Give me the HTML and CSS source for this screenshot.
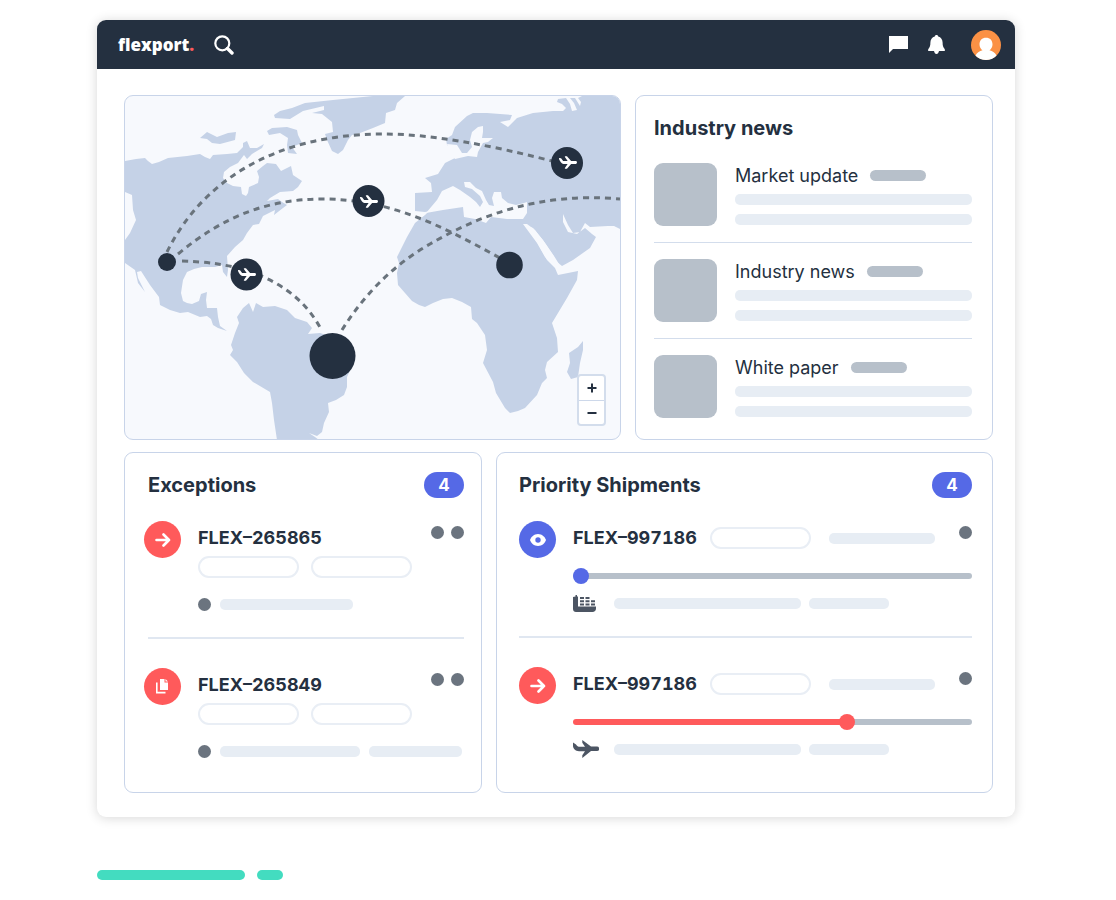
FILE: index.html
```html
<!DOCTYPE html>
<html lang="en">
<head>
  <meta charset="utf-8">
  <title>Flexport Dashboard</title>
  <meta name="viewport" content="width=device-width, initial-scale=1">
  <link rel="stylesheet" href="styles.css">
</head>
<body>
  <svg class="sprite" aria-hidden="true">
    <symbol id="plane" viewBox="0 0 26 18">
      <path d="M0 2.500L3 4.500C4 6.200 5 6.800 7 6.800H12L9.300 2.800V0L18 6.600H24a2.200 2.200 0 0 1 0 4.400H18L9.300 18V15.200L12 11.200H6C2.500 11.200 0 8.500 0 6Z"/>
    </symbol>
    <symbol id="plane-slim" viewBox="0 0 26 18">
      <path d="M0 2.500L3 2.800L6 7H12.500L8.500 1V0H11.500L17.500 7H24a2 2 0 0 1 0 4H17.500L11.500 18H8.500V17L12.500 11H6.500C3.500 11 1.500 7.500 0 4Z"/>
    </symbol>
    <symbol id="arrow" viewBox="0 0 16 14">
      <path d="M1.500 7H14M8.500 1.500L14 7L8.500 12.500" fill="none" stroke="currentColor" stroke-width="2.600" stroke-linecap="round" stroke-linejoin="round"/>
    </symbol>
  </svg>

  <div class="app">
    <header class="topbar">
      <a class="logo" href="#">flexport<span class="logo-dot">.</span></a>
      <button class="icon-btn" aria-label="Search">
        <svg width="20" height="20" viewBox="0 0 20 20" fill="none" stroke="#fff">
          <circle cx="8.300" cy="8.300" r="7" stroke-width="2.200"/>
          <path d="M13.500 13.500L18 18" stroke-width="3.400" stroke-linecap="round"/>
        </svg>
      </button>
      <div class="topbar-right">
        <button class="icon-btn" aria-label="Messages">
          <svg width="19" height="17" viewBox="0 0 19 17" fill="#fff"><path d="M0 0H19V13H4L0 17Z"/></svg>
        </button>
        <button class="icon-btn" aria-label="Notifications">
          <svg width="17" height="19" viewBox="0 0 17 19" fill="#fff"><path d="M8.500 0C9.500 0 10 .6 10.200 1.400C13 2.200 14.600 4.500 14.600 7.500C14.600 11 15.300 12.300 16.300 13.500C17 14.200 17.200 16 16.500 16H11C10.500 18 9.800 19 8.500 19S6.500 18 6 16H.5C-.2 16 0 14.200 .7 13.500C1.700 12.300 2.400 11 2.400 7.500C2.400 4.500 4 2.200 6.800 1.400C7 .6 7.500 0 8.500 0Z"/></svg>
        </button>
        <button class="icon-btn avatar" aria-label="Account">
          <svg width="30" height="30" viewBox="0 0 30 30">
            <circle cx="15" cy="15" r="15" fill="#fb9145"/>
            <path d="M15 7.800C19 7.800 21.500 10.500 21.500 14.300C21.500 17 20.300 19 18.500 20.300C21.500 21.200 24.500 23 25.500 25.700A15 15 0 0 1 4.500 25.700C5.500 23 8.500 21.200 11.500 20.300C9.700 19 8.500 17 8.500 14.300C8.500 10.500 11 7.800 15 7.800Z" fill="#fff"/>
          </svg>
        </button>
      </div>
    </header>

    <main class="content">
      <div class="row row-top">
        <section class="card map" aria-label="Shipment map">
          <svg class="map-svg" viewBox="125 96 495 343">
            <g class="land">
              <path d="M125 161L136 159L145 158L148 161L152 164L159 162L168 158L187 156L200 154L205 157L210 159L213 155L227 154L237 153L243 147L243 143L247 141L250 148L257 148L264 144L262 148L252 154L247 159L244 155L238 163L230 167L224 172L223 178L227 183L233 186L241 187L242 194L246 196L248 193L249 187L258 183L259 177L257 171L263 166L267 163L276 164L281 171L291 166L293 175L302 181L298 187L293 191L280 192L270 198L267 201L278 199L282 202L287 205L283 208L274 215L275 210L263 216L259 224L253 225L247 233L243 240L235 247L227 256L228 270L227 277L223 272L222 265L215 267L202 267L194 269L187 272L183 280L181 293L183 301L187 303L192 304L199 301L201 294L207 292L206 300L207 308L217 308L218 317L220 326L227 331L218 328L213 325L211 319L207 316L200 317L188 312L180 313L170 310L160 305L159 297L150 285L141 271L137 272L138 278L145 292L138 283L135 270L125 263V240L130 233L136 220L133 210L132 195L125 192Z"/>
              <path d="M200 138L207 132L217 137L228 133L236 132L235 140L220 144L212 143L207 139Z"/>
              <path d="M267 131L272 128L287 127L297 130L298 135L302 143L292 147L297 154L288 153L287 145L288 138L280 133L269 135Z"/>
              <path d="M274 115L280 111L292 108L305 103L333 100L373 96H405L397 103L395 110L386 113L385 123L373 128L360 133L352 135L348 140L343 150L338 154L332 151L327 140L325 134L333 132L332 122L322 114L312 113L324 110V106L303 111L290 119L275 118Z"/>
              <path d="M237 317L243 308L249 303L253 312L256 303L263 307L275 306L287 310L295 318L307 322L312 328L308 334L320 333L333 337L353 347L355 360L347 377V387L344 395L336 400L328 403L329 412L324 423L322 432L317 436L309 433L315 437L319 440H277L274 420L272 403L270 392L253 382L244 373L237 362L230 355L233 350L231 345L235 333L239 323Z"/>
              <path d="M428 212L443 208L463 205H530L525 225L537 242L547 260L555 268L558 275L578 271L577 280L567 298L552 323L557 338L558 352L547 362L545 370L547 378L542 383L537 395L525 408L518 411L510 413L505 408L496 393L493 382L483 363L487 350L485 335L477 323L472 319L471 307L462 302L452 298L443 299L433 303L425 307L419 305L412 301L398 285L397 273L399 263L397 257L407 237L415 223L425 215Z"/>
              <path d="M415 193L432 192L431 183L425 178L438 174L445 163L455 158L468 155L462 154L447 145L446 139L452 135L455 127L467 116L473 113L487 113L512 115L510 120L500 122L508 127L517 118L533 113L553 111L563 111L566 108L562 104L557 102L558 99L566 98L570 104L572 111L577 110L574 103L570 98L575 98L580 106L581 102L578 98L582 96H620V229L614 226L608 226L590 227L585 223L580 232L573 233L568 225L563 214L563 222L568 232L577 234L585 228L592 234L596 237L590 248L573 260L562 266L557 262L553 255L543 240L533 228L523 224L500 214L430 211L425 212L415 211Z"/>
              <path d="M583 341V350L580 363L578 377L571 379L567 372L570 363L569 353L578 347Z"/>
            </g>
            <g class="water">
              <path d="M426 213L437 200L442 191L453 186L460 190L470 197L476 202L480 207L483 202L480 196L472 189L465 187L464 182L470 182L476 188L482 191L486 200L489 205L494 206L492 198L494 192L501 192L502 198L508 203L516 205L524 203L527 202V213L523 219L507 219L491 217L486 223L475 219L464 217L463 207L443 210Z"/>
              <path d="M478 127L483 126L483 132L482 138L493 138L488 142L483 143L478 152L477 157L468 156L455 159L450 152L447 144L457 145L462 153L467 153L472 147L470 140L472 132Z"/>
              <path d="M523 224L527 224L535 230L545 243L554 256L559 264L558 270L552 264L545 257L537 243Z"/>
            </g>
            <g class="routes">
              <path d="M167 252C200 185 270 134 384 134C430 134 490 145 552 161"/>
              <path d="M178 254C225 215 270 199 322 199C390 199 440 225 500 258"/>
              <path d="M182 261C210 262 222 264 246 270C290 285 310 308 322 331"/>
              <path d="M342 330C365 293 395 264 430 244C480 215 540 192 620 199"/>
            </g>
            <g class="nodes">
              <circle cx="167" cy="262" r="9"/>
              <circle cx="246.500" cy="274.500" r="16"/>
              <circle cx="332.500" cy="356" r="23"/>
              <circle cx="368.500" cy="201" r="16"/>
              <circle cx="567" cy="163" r="16"/>
              <circle cx="509.500" cy="265" r="13.300"/>
            </g>
            <g fill="#fff">
              <use href="#plane-slim" x="238" y="268" width="18" height="13"/>
              <use href="#plane-slim" x="360" y="195" width="18" height="13"/>
              <use href="#plane-slim" x="559" y="156" width="18" height="13"/>
            </g>
          </svg>
          <div class="zoom">
            <button aria-label="Zoom in"><svg width="10" height="10" viewBox="0 0 10 10"><path d="M5 0.500V9.500M0.500 5H9.500"/></svg></button>
            <button aria-label="Zoom out"><svg width="10" height="10" viewBox="0 0 10 10"><path d="M0.500 5H9.500"/></svg></button>
          </div>
        </section>

        <section class="card news">
          <h2>Industry news</h2>
          <article class="news-item">
            <div class="thumb"></div>
            <div class="news-body">
              <h3>Market update <span class="tag"></span></h3>
              <div class="bar"></div>
              <div class="bar"></div>
            </div>
          </article>
          <article class="news-item">
            <div class="thumb"></div>
            <div class="news-body">
              <h3>Industry news <span class="tag"></span></h3>
              <div class="bar"></div>
              <div class="bar"></div>
            </div>
          </article>
          <article class="news-item">
            <div class="thumb"></div>
            <div class="news-body">
              <h3>White paper <span class="tag"></span></h3>
              <div class="bar"></div>
              <div class="bar"></div>
            </div>
          </article>
        </section>
      </div>

      <div class="row row-bottom">
        <section class="card exceptions">
          <div class="card-head">
            <h2>Exceptions</h2>
            <span class="count">4</span>
          </div>
          <article class="item">
            <div class="badge red"><svg width="16" height="14"><use href="#arrow"/></svg></div>
            <div class="item-body">
              <div class="item-title">
                <h3>FLEX–265865</h3>
                <div class="dots"><span class="dot"></span><span class="dot"></span></div>
              </div>
              <div class="pills"><span class="pill"></span><span class="pill"></span></div>
              <div class="meta"><span class="dot"></span><span class="bar w-133"></span></div>
            </div>
          </article>
          <article class="item">
            <div class="badge red">
              <svg width="13" height="15" viewBox="0 0 13 15" fill="#fff">
                <path d="M4 0H8.500V3.500H12V11H4ZM9.500 0L12 2.500H9.500Z"/>
                <path d="M.8 3.500V13.600H9.500" fill="none" stroke="#fff" stroke-width="1.600"/>
              </svg>
            </div>
            <div class="item-body">
              <div class="item-title">
                <h3>FLEX–265849</h3>
                <div class="dots"><span class="dot"></span><span class="dot"></span></div>
              </div>
              <div class="pills"><span class="pill"></span><span class="pill"></span></div>
              <div class="meta"><span class="dot"></span><span class="bar w-140"></span><span class="bar w-93"></span></div>
            </div>
          </article>
        </section>

        <section class="card shipments">
          <div class="card-head">
            <h2>Priority Shipments</h2>
            <span class="count">4</span>
          </div>
          <article class="item">
            <div class="badge blue">
              <svg width="16" height="12" viewBox="0 0 16 12">
                <path d="M8 0C12 0 15 3 16 6C15 9 12 12 8 12S1 9 0 6C1 3 4 0 8 0Z" fill="#fff"/>
                <circle cx="8" cy="6" r="2.700" fill="#5569e6"/>
              </svg>
            </div>
            <div class="item-body">
              <div class="item-title">
                <h3>FLEX–997186</h3>
                <span class="pill"></span>
                <span class="bar w-106"></span>
                <span class="dot"></span>
              </div>
              <input class="track blue-track" type="range" min="0" max="200" value="0" aria-label="FLEX-997186 progress" style="--progress: 0%">
              <div class="meta">
                <span class="mode">
                  <svg width="23" height="17" viewBox="0 0 23 17">
                    <path d="M0 2L2.500 1.500V0H4V1.500H5V11.500H23V13.500C23 15.500 21.500 17 19.500 17H3C1.300 17 0 15.700 0 14Z"/>
                    <path d="M7 2H11V4H7ZM12.500 2H16.500V4H12.500ZM7 5.200H11V7.200H7ZM12.500 5.200H16.500V7.200H12.500ZM18 5.200H22V7.200H18ZM7 8.400H11V10.400H7ZM12.500 8.400H16.500V10.400H12.500ZM18 8.400H22V10.400H18Z"/>
                  </svg>
                </span>
                <span class="bar w-187"></span><span class="bar w-80"></span>
              </div>
            </div>
          </article>
          <article class="item">
            <div class="badge red"><svg width="16" height="14"><use href="#arrow"/></svg></div>
            <div class="item-body">
              <div class="item-title">
                <h3>FLEX–997186</h3>
                <span class="pill"></span>
                <span class="bar w-106"></span>
                <span class="dot"></span>
              </div>
              <input class="track red-track" type="range" min="0" max="200" value="139" aria-label="FLEX-997186 progress" style="--progress: 69%">
              <div class="meta">
                <span class="mode"><svg width="26" height="18"><use href="#plane"/></svg></span>
                <span class="bar w-187"></span><span class="bar w-80"></span>
              </div>
            </div>
          </article>
        </section>
      </div>
    </main>
  </div>

  <div class="accent"><span class="accent-long"></span><span class="accent-short"></span></div>
</body>
</html>
```
FILE: styles.css
```css
* {
  box-sizing: border-box;
}

body {
  margin: 0;
  padding: 20px 101px 20px 97px;
  background: #fff;
  color: #243040;
  font-family: Inter, "Liberation Sans", sans-serif;
}

h2, h3 {
  margin: 0;
}

button {
  padding: 0;
  border: 0;
  background: none;
  cursor: pointer;
}

svg {
  display: block;
}

.sprite {
  position: absolute;
  width: 0;
  height: 0;
}

.app {
  background: #fff;
  border-radius: 9px;
  box-shadow: 0 1px 12px rgba(0, 0, 0, 0.16);
}

/* top bar */
.topbar {
  display: flex;
  align-items: center;
  height: 49px;
  padding: 0 14px 0 21px;
  background: #243040;
  border-radius: 9px 9px 0 0;
}

.logo {
  margin-right: 20px;
  color: #fff;
  font-family: "Open Sans", sans-serif;
  font-size: 17px;
  font-weight: 800;
  line-height: 24px;
  text-decoration: none;
}

.logo-dot {
  color: #ff5a5b;
}

.topbar-right {
  display: flex;
  align-items: center;
  gap: 20px;
  margin-left: auto;
}

.avatar {
  margin-left: 6px;
}

/* cards */
.content {
  display: flex;
  flex-direction: column;
  gap: 12px;
  padding: 26px 22px 24px 27px;
}

.row {
  display: grid;
  gap: 14px;
}

.row-top {
  grid-template-columns: 497fr 358fr;
}

.row-bottom {
  grid-template-columns: 358fr 497fr;
}

.card {
  min-width: 0;
  border: 1px solid #c8d4e9;
  border-radius: 9px;
}

.card h2 {
  font-size: 20px;
  font-weight: 700;
  line-height: 26px;
}

.map {
  position: relative;
  overflow: hidden;
  background: #f7f9fd;
}

.news {
  padding: 19px 20px 21px 18px;
}

.exceptions {
  padding: 19px 17px 32px 19px;
}

.shipments {
  padding: 19px 20px 32px 22px;
}

/* map */
.map-svg {
  width: 100%;
  height: auto;
}

.land {
  fill: #c5d2e7;
}

.water {
  fill: #f7f9fd;
}

.routes {
  fill: none;
  stroke: #69737c;
  stroke-width: 3;
  stroke-dasharray: 6 5;
}

.nodes {
  fill: #243040;
}

.zoom {
  position: absolute;
  right: 14px;
  bottom: 13px;
  display: flex;
  flex-direction: column;
  width: 29px;
  background: #fff;
  border: 2px solid #d3ddec;
  border-radius: 4px;
}

.zoom button {
  display: flex;
  align-items: center;
  justify-content: center;
  height: 24px;
}

.zoom button + button {
  border-top: 1px solid #cdd8ea;
}

.zoom path {
  stroke: #243040;
  stroke-width: 2;
}

/* news */
.news-item {
  display: flex;
  gap: 18px;
  padding: 16px 0;
  border-bottom: 1px solid #d3ddec;
}

.news h2 + .news-item {
  padding-top: 22px;
}

.news-item:last-child {
  padding-bottom: 0;
  border-bottom: 0;
}

.thumb {
  flex: none;
  width: 63px;
  height: 63px;
  background: #b7c0ca;
  border-radius: 9px;
}

.news-body {
  display: flex;
  flex: 1;
  flex-direction: column;
  gap: 9px;
  padding-top: 3px;
}

.news-body h3 {
  display: flex;
  align-items: center;
  gap: 12px;
  height: 19px;
  font-size: 18px;
  font-weight: 400;
  line-height: 24px;
}

.tag {
  width: 56px;
  height: 11px;
  background: #b7c0ca;
  border-radius: 6px;
}

.bar {
  height: 11px;
  background: #e7edf4;
  border-radius: 5px;
}

.w-80 { width: 80px; }
.w-93 { width: 93px; }
.w-106 { width: 106px; }
.w-133 { width: 133px; }
.w-140 { width: 140px; }
.w-187 { width: 187px; }

/* exceptions and shipments */
.card-head {
  display: flex;
  align-items: center;
  justify-content: space-between;
  margin-bottom: 23px;
}

.exceptions .card-head {
  padding-left: 4px;
}

.count {
  width: 40px;
  height: 26px;
  border-radius: 13px;
  background: #5569e6;
  color: #fff;
  font-size: 17px;
  font-weight: 700;
  line-height: 26px;
  text-align: center;
}

.item {
  display: flex;
  gap: 17px;
}

.item + .item {
  position: relative;
  margin-top: 24px;
  padding-top: 31px;
}

.item + .item::before {
  content: "";
  position: absolute;
  top: 0;
  right: 0;
  left: 0;
  border-top: 2px solid #e0e7f1;
}

.exceptions .item + .item::before {
  left: 4px;
}

.badge {
  display: flex;
  flex: none;
  align-items: center;
  justify-content: center;
  width: 37px;
  height: 37px;
  border-radius: 50%;
  color: #fff;
}

.red {
  background: #ff5a5b;
}

.blue {
  background: #5569e6;
}

.item-body {
  display: flex;
  flex: 1;
  flex-direction: column;
  min-width: 0;
  padding-top: 5px;
}

.item-title {
  display: flex;
  align-items: center;
  height: 24px;
}

.item-title h3 {
  font-size: 18px;
  font-weight: 700;
  font-variant-numeric: tabular-nums;
  line-height: 24px;
}

.dots {
  display: flex;
  gap: 7px;
  align-self: flex-start;
  margin-left: auto;
}

.dot {
  flex: none;
  width: 13px;
  height: 13px;
  background: #6b747f;
  border-radius: 50%;
}

.pill {
  width: 101px;
  height: 22px;
  border: 2px solid #e9eef5;
  border-radius: 11px;
}

.pills {
  display: flex;
  gap: 12px;
  margin-top: 6px;
}

.meta {
  display: flex;
  align-items: center;
  height: 18px;
}

.exceptions .meta {
  gap: 9px;
  margin-top: 17px;
}

.shipments .pill {
  margin-left: 13px;
}

.shipments .item-title .bar {
  margin-left: 18px;
}

.shipments .item-title .dot {
  align-self: flex-start;
  margin-left: auto;
}

.shipments .meta {
  gap: 8px;
  margin-top: 10px;
}

.mode {
  flex: none;
  width: 33px;
  fill: #4c5563;
}

/* progress slider */
.track {
  width: 100%;
  height: 16px;
  margin: 18px 0 0;
  appearance: none;
  background: none;
}

.track::-webkit-slider-runnable-track {
  height: 6px;
  border-radius: 3px;
  background: linear-gradient(to right, var(--fill) var(--progress), #b7c0ca var(--progress));
}

.track::-webkit-slider-thumb {
  width: 16px;
  height: 16px;
  margin-top: -5px;
  appearance: none;
  border-radius: 50%;
  background: var(--fill);
}

.blue-track {
  --fill: #5569e6;
}

.red-track {
  --fill: #ff5a5b;
}

/* accent bars */
.accent {
  display: flex;
  gap: 12px;
  margin-top: 53px;
}

.accent span {
  height: 10px;
  background: #43dcc0;
  border-radius: 5px;
}

.accent-long {
  width: 148px;
}

.accent-short {
  width: 26px;
}
```
